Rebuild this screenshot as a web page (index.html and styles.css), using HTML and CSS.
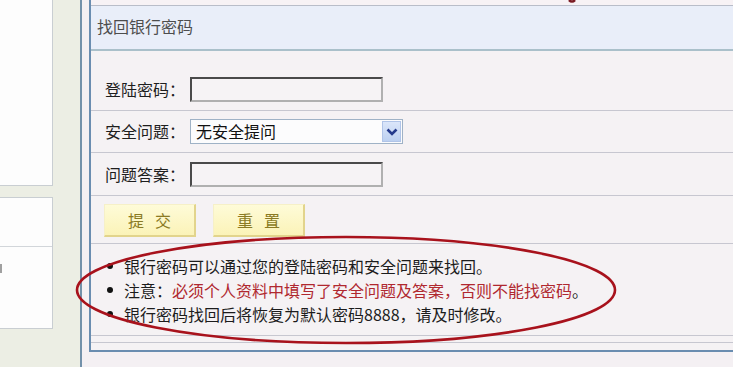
FILE: index.html
```html
<!DOCTYPE html>
<html lang="zh-CN">
<head>
<meta charset="utf-8">
<title>找回银行密码</title>
<link rel="stylesheet" href="styles.css">
</head>
<body>
<aside class="side">
  <div class="panel p1"></div>
  <div class="panel p2">
    <div class="p2-top"></div>
    <div class="p2-body"><span class="frag"></span></div>
  </div>
</aside>
<div class="frame">
  <div class="box">
    <div class="topstrip"></div>
    <div class="title">找回银行密码</div>
    <div class="form">
      <div class="row r1">
        <span class="label">登陆密码：</span>
        <span class="txt"></span>
      </div>
      <div class="row r2">
        <span class="label">安全问题：</span>
        <span class="select"><span class="sel-text">无安全提问</span><span class="arrow"><svg width="12" height="8" viewBox="0 0 12 8"><path d="M1.5 1.5 L6 6 L10.5 1.5" fill="none" stroke="#243a8c" stroke-width="2.6"/></svg></span></span>
      </div>
      <div class="row r3">
        <span class="label">问题答案：</span>
        <span class="txt"></span>
      </div>
      <div class="row r4">
        <span class="btn">提交</span>
        <span class="btn">重置</span>
      </div>
      <div class="row r5">
        <ul class="notes">
          <li>银行密码可以通过您的登陆密码和安全问题来找回。</li>
          <li>注意：<span class="red">必须个人资料中填写了安全问题及答案，否则不能找密码</span>。</li>
          <li>银行密码找回后将恢复为默认密码8888，请及时修改。</li>
        </ul>
      </div>
      <div class="tail"></div>
    </div>
  </div>
</div>
<svg class="marks" width="733" height="367" viewBox="0 0 733 367">
  <ellipse cx="346" cy="290" rx="269" ry="53" fill="none" stroke="#a8121c" stroke-width="2.6"/>
  <path d="M569 0 Q572 3 575 0" fill="none" stroke="#7a1a22" stroke-width="2.5"/>
</svg>
</body>
</html>
```

FILE: styles.css
```css
html, body {
  margin: 0;
  padding: 0;
}
body {
  width: 733px;
  height: 367px;
  overflow: hidden;
  display: flex;
  background: #eceee4;
  font-family: "Noto Sans CJK SC", "Noto Sans", sans-serif;
  color: #1c1c1c;
  position: relative;
}
.side {
  width: 53px;
  flex: none;
  display: flex;
  flex-direction: column;
}
.panel {
  background: #fdfdfd;
  border-right: 1px solid #c9ced2;
  border-bottom: 1px solid #c9ced2;
}
.p1 {
  height: 185px;
}
.p2 {
  margin-top: 11px;
  border-top: 1px solid #c9ced2;
  height: 130px;
  display: flex;
  flex-direction: column;
}
.p2-top {
  height: 48px;
  border-bottom: 1px solid #d2d6da;
}
.p2-body {
  padding-top: 17px;
}
.frag {
  display: block;
  width: 2px;
  height: 9px;
  background: #a0a0a0;
}
.frame {
  margin-left: 27px;
  flex: 1;
  border-left: 2px solid #7391aa;
  padding-left: 7px;
  background: #f4f0f3;
  display: flex;
  flex-direction: column;
  min-width: 0;
}
.box {
  border-left: 2px solid #6a8db0;
  border-bottom: 2px solid #6a8db0;
  background: #f5f2f4;
  height: 352px;
  box-sizing: border-box;
}
.topstrip {
  height: 5px;
  border-bottom: 1px solid #b9bdc9;
  background: #f7f2f5;
}
.title {
  height: 43px;
  border-bottom: 2px solid #aac0ca;
  background: #e9eef9;
  padding-left: 6px;
  font-size: 16px;
  line-height: 40px;
  color: #4d4d4d;
}
.row {
  display: flex;
  align-items: center;
  border-bottom: 1px solid #c7c7d0;
  padding-left: 14px;
}
.r1 {
  padding-top: 26px;
  padding-bottom: 8px;
}
.r2 {
  padding-top: 8px;
  padding-bottom: 8px;
}
.r3 {
  padding-top: 9px;
  padding-bottom: 8px;
}
.r4 {
  padding-top: 8px;
  padding-bottom: 6px;
  padding-left: 13px;
  gap: 17px;
}
.r5 {
  padding-left: 0;
  padding-top: 10px;
  padding-bottom: 9px;
}
.tail {
  height: 6px;
  border-bottom: 1px solid #c7c7d0;
}
.label {
  width: 85px;
  font-size: 16px;
  color: #1e1e1e;
  line-height: 25px;
}
.txt {
  width: 193px;
  height: 25px;
  box-sizing: border-box;
  border: 2px solid;
  border-color: #4a4a4a #b0b0b0 #b0b0b0 #4a4a4a;
  background: #f6f3f5;
}
.select {
  width: 213px;
  height: 25px;
  box-sizing: border-box;
  border: 1px solid #9fb2c6;
  background: #fcfcfd;
  display: flex;
  align-items: center;
  justify-content: space-between;
  padding: 1px 1px 1px 5px;
}
.sel-text {
  font-size: 16px;
  color: #111;
  line-height: 21px;
}
.arrow {
  width: 19px;
  height: 21px;
  box-sizing: border-box;
  background: linear-gradient(#dbe6fa, #bcd0f0);
  border: 1px solid #b0c4e8;
  display: flex;
  align-items: center;
  justify-content: center;
}
.btn {
  width: 92px;
  height: 33px;
  box-sizing: border-box;
  background: linear-gradient(#fefbd8, #fbf3b8);
  border-top: 1px solid #f6f0c8;
  border-left: 1px solid #f6f0c8;
  border-right: 2px solid #e2d48c;
  border-bottom: 2px solid #e2d48c;
  color: #8a7a24;
  font-size: 16px;
  letter-spacing: 11px;
  padding-left: 11px;
  text-align: center;
  line-height: 30px;
}
.notes {
  list-style: none;
  margin: 0;
  padding: 0;
  font-size: 16px;
  line-height: 24px;
  width: 100%;
}
.notes li {
  display: flex;
  align-items: center;
  white-space: nowrap;
}
.notes li::before {
  content: "";
  width: 6px;
  height: 6px;
  border-radius: 50%;
  background: #111;
  margin-left: 16px;
  margin-right: 11px;
  flex: none;
}
.red {
  color: #b0282f;
}
.marks {
  position: absolute;
  left: 0;
  top: 0;
  pointer-events: none;
}
```
